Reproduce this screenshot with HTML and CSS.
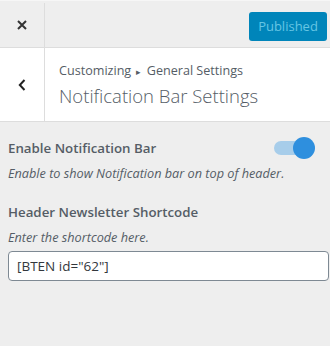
FILE: index.html
```html
<!DOCTYPE html>
<html>
<head>
<meta charset="utf-8">
<link rel="stylesheet" href="styles.css">
</head>
<body>
<div class="header">
  <div class="close">
    <svg width="10" height="10" viewBox="0 0 10 10"><path d="M1 1L9 9M9 1L1 9" stroke="#333" stroke-width="2"/></svg>
  </div>
  <div class="spacer"></div>
  <button class="publish">Published</button>
</div>
<div class="section">
  <div class="back">
    <svg width="8" height="12" viewBox="0 0 8 12"><path d="M6.5 1L1.8 6L6.5 11" fill="none" stroke="#222" stroke-width="2"/></svg>
  </div>
  <div class="title">
    <div class="crumb">Customizing <span class="arrow">▸</span> General Settings</div>
    <div class="heading">Notification Bar Settings</div>
  </div>
</div>
<div class="controls">
  <div class="control toggle-row">
    <div class="row">
      <span class="label">Enable Notification Bar</span>
      <span class="toggle"><span class="track"></span><span class="knob"></span></span>
    </div>
    <div class="desc">Enable to show Notification bar on top of header.</div>
  </div>
  <div class="control">
    <div class="label">Header Newsletter Shortcode</div>
    <div class="desc">Enter the shortcode here.</div>
    <input class="field" type="text" value="[BTEN id=&quot;62&quot;]">
  </div>
</div>
</body>
</html>
```
FILE: styles.css
```css
html, body {
  margin: 0;
  padding: 0;
  background: #eeeeee;
  font-family: "Open Sans", "Noto Sans", sans-serif;
  color: #555d66;
}
.header {
  display: flex;
  align-items: center;
  border-top: 1px solid #f6f6f6;
  border-bottom: 1px solid #dddddd;
  box-sizing: border-box;
  height: 48px;
}
.close {
  width: 44px;
  height: 44px;
  margin-top: 2px;
  align-self: flex-end;
  border-right: 1px solid #dddddd;
  display: flex;
  align-items: center;
  justify-content: center;
}
.spacer { flex: 1; }
.publish {
  width: 78px;
  height: 29px;
  margin-right: 3px;
  margin-top: 4px;
  border: 0;
  border-radius: 3px;
  background: #0085ba;
  color: #66c6e4;
  font-family: "Open Sans", sans-serif;
  font-size: 13px;
  padding: 0;
}
.section {
  display: flex;
  background: #ffffff;
  height: 74px;
  box-sizing: border-box;
  border-bottom: 1px solid #dddddd;
}
.back {
  width: 44px;
  border-right: 1px solid #dddddd;
  display: flex;
  align-items: center;
  justify-content: center;
}
.title {
  padding: 15px 0 0 14px;
}
.crumb {
  font-size: 12.6px;
  line-height: 16px;
  color: #555d66;
}
.arrow { font-size: 9px; padding: 0 2px; }
.heading {
  font-size: 18.5px;
  font-weight: 300;
  line-height: 26px;
  margin-top: 3px;
  color: #555d66;
}
.controls {
  padding: 15px 1px 0 8px;
}
.control { margin-bottom: 19px; }
.row {
  display: flex;
  justify-content: space-between;
  align-items: center;
}
.label {
  font-size: 13.3px;
  font-weight: 600;
  line-height: 22px;
  color: #555d66;
}
.desc {
  font-size: 12.7px;
  font-style: italic;
  line-height: 18px;
  margin-top: 5px;
  color: #555d66;
}
.toggle {
  position: relative;
  width: 44px;
  height: 22px;
  margin-right: 12px;
}
.track {
  position: absolute;
  left: 1px;
  top: 4px;
  width: 30px;
  height: 14px;
  border-radius: 7px;
  background: #a7cdea;
}
.knob {
  position: absolute;
  left: 20px;
  top: 0;
  width: 22px;
  height: 22px;
  border-radius: 50%;
  background: #2e8fde;
}
.field {
  display: block;
  width: 100%;
  box-sizing: border-box;
  height: 30px;
  margin-top: 5px;
  border: 1px solid #7e8993;
  border-radius: 4px;
  background: #fff;
  padding: 0 8px;
  font-family: "Open Sans", sans-serif;
  font-size: 13.5px;
  color: #32373c;
}
```
